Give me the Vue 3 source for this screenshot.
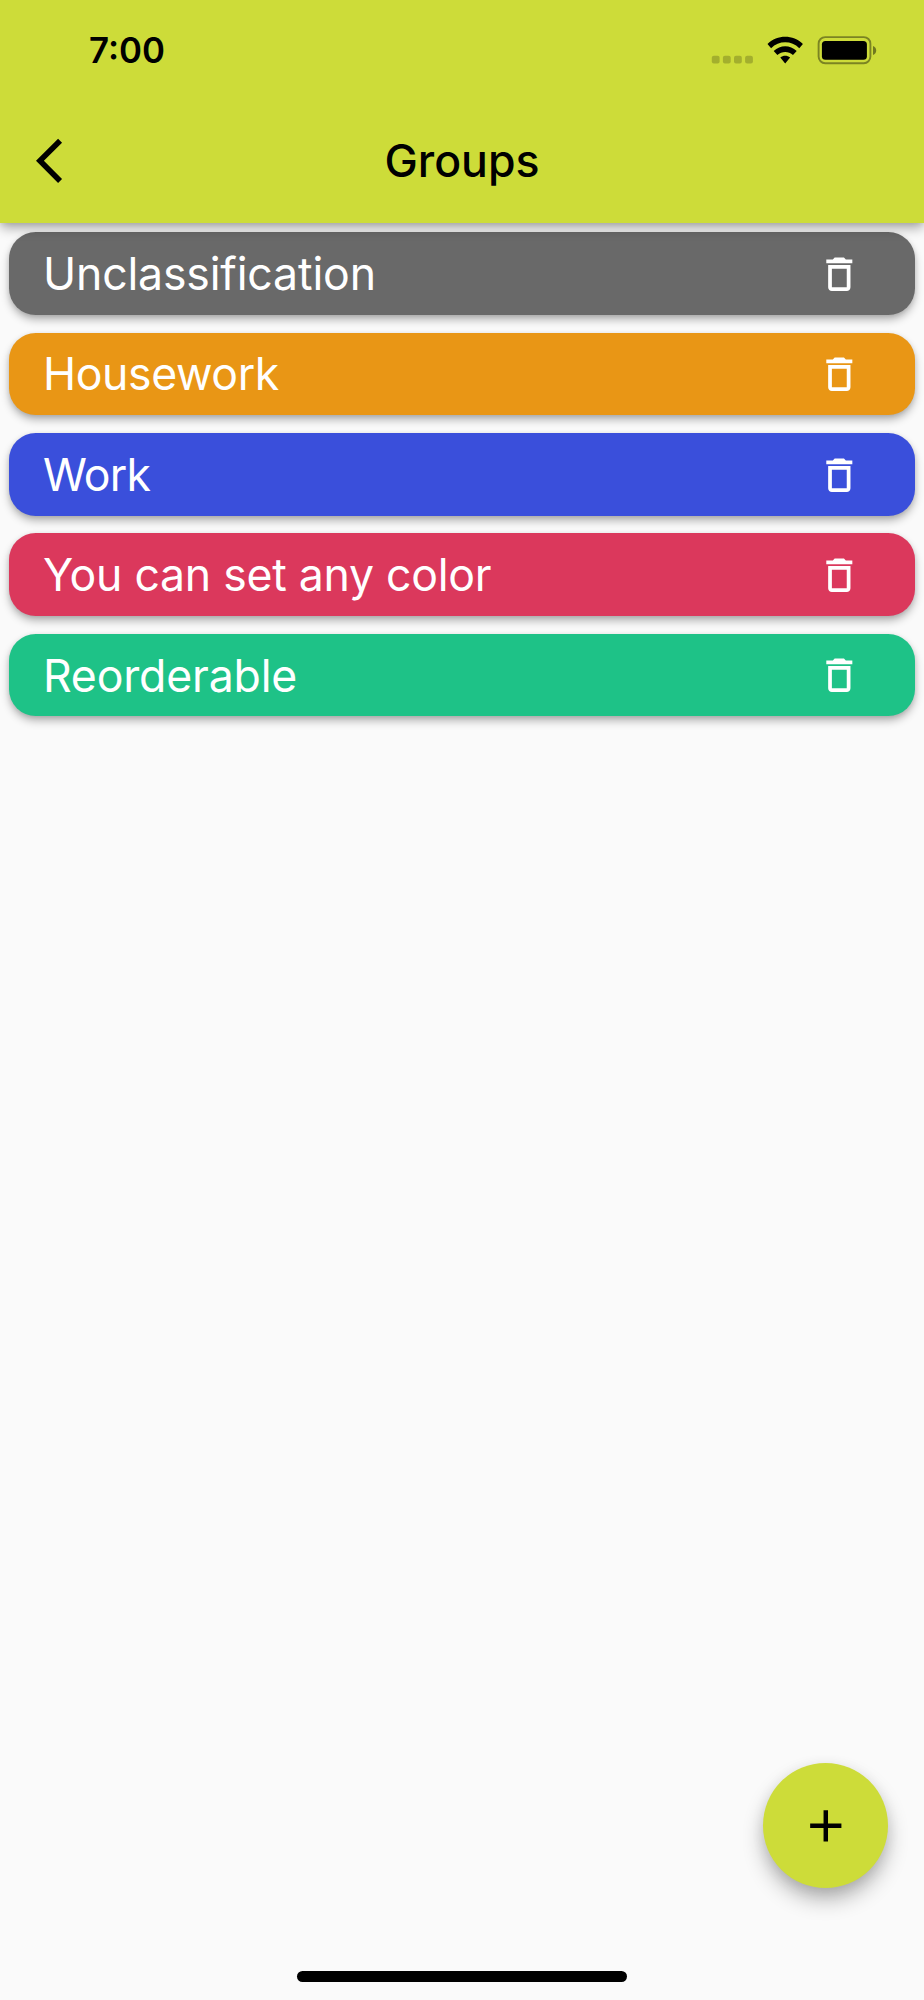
<script setup>
const groups = [
  { name: 'Unclassification', tone: 'gray' },
  { name: 'Housework', tone: 'orange' },
  { name: 'Work', tone: 'blue' },
  { name: 'You can set any color', tone: 'red' },
  { name: 'Reorderable', tone: 'green' }
]
</script>

<template>
  <div class="screen">
    <header class="header">
      <div class="status">
        <span class="time">7:00</span>
        <svg class="indicators" width="166" height="32" viewBox="711 34 166 32">
          <g fill="#000" opacity="0.2">
            <rect x="711.8" y="55.8" width="7.8" height="7.6" rx="2" />
            <rect x="722.9" y="55.8" width="7.8" height="7.6" rx="2" />
            <rect x="734" y="55.8" width="7.8" height="7.6" rx="2" />
            <rect x="745.1" y="55.8" width="7.8" height="7.6" rx="2" />
          </g>
          <path d="M767.5 44.1C777.3 34.4 793.1 34.4 802.9 44.1L799.3 48.2C791.5 40.4 778.9 40.4 771.1 48.2ZM773.7 51C780.3 44.5 790.1 44.5 796.7 51L793 54.9C788.6 50.9 781.8 50.9 777.4 54.9ZM780.3 57.6C783.2 55.2 787.2 55.2 790.1 57.6L785.2 63.4Z" />
          <rect x="818.6" y="37.1" width="51.8" height="26.1" rx="6.6" fill="none" stroke="#000" stroke-opacity="0.4" stroke-width="1.9" />
          <rect x="821.9" y="41" width="45" height="18.8" rx="3.6" />
          <path d="M873 46Q876.2 47.2 876.2 50.4Q876.2 53.7 873 55Z" opacity="0.45" />
        </svg>
      </div>
      <div class="bar">
        <svg class="back" viewBox="0 0 24 24"><path d="M11.67 3.87L9.9 2.1 0 12l9.9 9.9 1.77-1.77L3.54 12z" /></svg>
        <h1 class="title">Groups</h1>
      </div>
    </header>
    <main class="list">
      <div v-for="g in groups" :key="g.name" class="card" :class="g.tone">
        <span class="name">{{ g.name }}</span>
        <svg class="trash" viewBox="0 0 24 24"><path d="M6 19c0 1.1.9 2 2 2h8c1.1 0 2-.9 2-2V7H6v12zM8 9h8v10H8V9zm7.5-5l-1-1h-5l-1 1H5v2h14V4z" /></svg>
      </div>
    </main>
    <button class="fab" aria-label="Add">
      <svg viewBox="0 0 24 24"><path d="M19 13h-6v6h-2v-6H5v-2h6V5h2v6h6v2z" /></svg>
    </button>
    <div class="home"></div>
  </div>
</template>

<style>
body { background: #fafafa; }
</style>

<style scoped>
.screen {
  width: 924px;
  height: 2000px;
  display: flex;
  flex-direction: column;
  background: #fafafa;
  font-family: Inter, "Liberation Sans", sans-serif;
  overflow: hidden;
}
.header {
  position: relative;
  z-index: 1;
  flex: none;
  height: 223.2px;
  background: #cddc39;
  box-shadow: 0 6px 11px -1px rgba(0,0,0,.33), 0 1px 5px 0 rgba(0,0,0,.08);
}
.status {
  height: 98.2px;
  box-sizing: border-box;
  padding: 0 47px 0 89px;
  display: flex;
  justify-content: space-between;
  align-items: flex-start;
}
.time {
  margin-top: 29px;
  font-size: 34.8px;
  line-height: 42px;
  font-weight: 580;
}
.indicators { margin-top: 34px; }
.bar {
  height: 125px;
  display: grid;
  grid-template-columns: 100px 1fr 100px;
  align-items: center;
}
.back { width: 53.57px; height: 53.57px; margin-left: 36px; }
.title {
  margin: 0;
  text-align: center;
  font-size: 44.6px;
  line-height: 54px;
  font-weight: 450;
}
.list {
  flex: 1;
  display: flex;
  flex-direction: column;
  gap: 17.86px;
  padding: 8.93px;
}
.card {
  flex: none;
  height: 82.58px;
  box-sizing: border-box;
  padding: 1.2px 53.6px 0 34px;
  border-radius: 26.8px;
  display: flex;
  align-items: center;
  justify-content: space-between;
  color: #fff;
  box-shadow: 0 5px 10px -1px rgba(0,0,0,.33), 0 1px 5px 0 rgba(0,0,0,.08);
}
.gray { background: #696969; letter-spacing: -0.16px; }
.orange { background: #e99615; letter-spacing: -0.38px; }
.blue { background: #3a4fdb; letter-spacing: -0.75px; }
.red { background: #db385c; letter-spacing: -0.26px; }
.green { background: #1ec287; letter-spacing: -0.17px; }
.name { font-size: 44.6px; line-height: 54px; white-space: nowrap; }
.trash { width: 44.64px; height: 44.64px; fill: currentColor; }
.fab {
  align-self: flex-end;
  flex: none;
  width: 125px;
  height: 125px;
  margin: 0 35.7px 83px 0;
  padding: 0;
  border: 0;
  border-radius: 50%;
  background: #cddc39;
  display: flex;
  align-items: center;
  justify-content: center;
  box-shadow: 0 12px 22px -2px rgba(0,0,0,.32), 0 3px 14px 0 rgba(0,0,0,.07);
}
.fab svg { width: 53.57px; height: 53.57px; }
.home {
  align-self: center;
  flex: none;
  width: 330px;
  height: 11px;
  margin-bottom: 18px;
  border-radius: 5.5px;
  background: #000;
}
</style>
